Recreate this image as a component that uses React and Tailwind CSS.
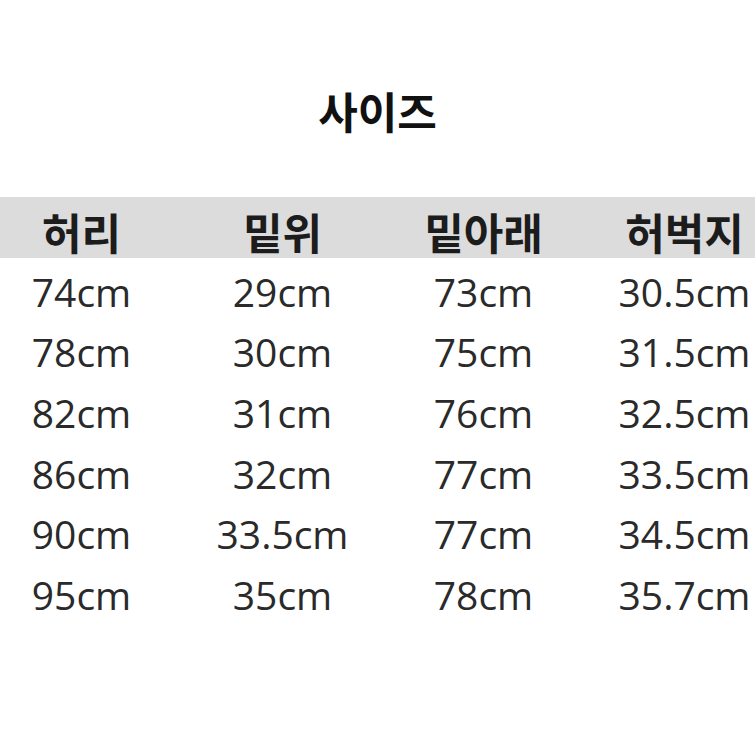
import React from "react";

const headers = ["허리", "밑위", "밑아래", "허벅지"];
const rows = [
  ["74cm", "29cm", "73cm", "30.5cm"],
  ["78cm", "30cm", "75cm", "31.5cm"],
  ["82cm", "31cm", "76cm", "32.5cm"],
  ["86cm", "32cm", "77cm", "33.5cm"],
  ["90cm", "33.5cm", "77cm", "34.5cm"],
  ["95cm", "35cm", "78cm", "35.7cm"],
];

export default function App() {
  return (
    <div className="w-[755px] h-[755px] bg-white overflow-hidden">
      <div className="h-[197px] flex justify-center pt-[89px]">
        <div
          className="text-[43px] leading-none font-bold text-[#111]"
          style={{ fontFamily: '"Noto Sans CJK KR", sans-serif' }}
        >
          사이즈
        </div>
      </div>
      <div className="h-[61px] bg-[#dcdcdc] flex ml-[-19px] pt-[7px]">
        {headers.map((h) => (
          <div
            key={h}
            className="w-[201px] shrink-0 flex items-center justify-center text-[43px] font-bold text-[#1c1c1c] leading-none"
            style={{ fontFamily: '"Noto Sans CJK KR", sans-serif' }}
          >
            {h}
          </div>
        ))}
      </div>
      <div className="mt-[3px] flex flex-col">
        {rows.map((r, i) => (
          <div key={i} className="h-[60.6px] flex ml-[-19px]">
            {r.map((c, j) => (
              <div
                key={j}
                className="w-[201px] shrink-0 flex items-center justify-center text-[39px] text-[#2a2a2a] leading-none"
                style={{ fontFamily: '"Open Sans", sans-serif' }}
              >
                {c}
              </div>
            ))}
          </div>
        ))}
      </div>
    </div>
  );
}
